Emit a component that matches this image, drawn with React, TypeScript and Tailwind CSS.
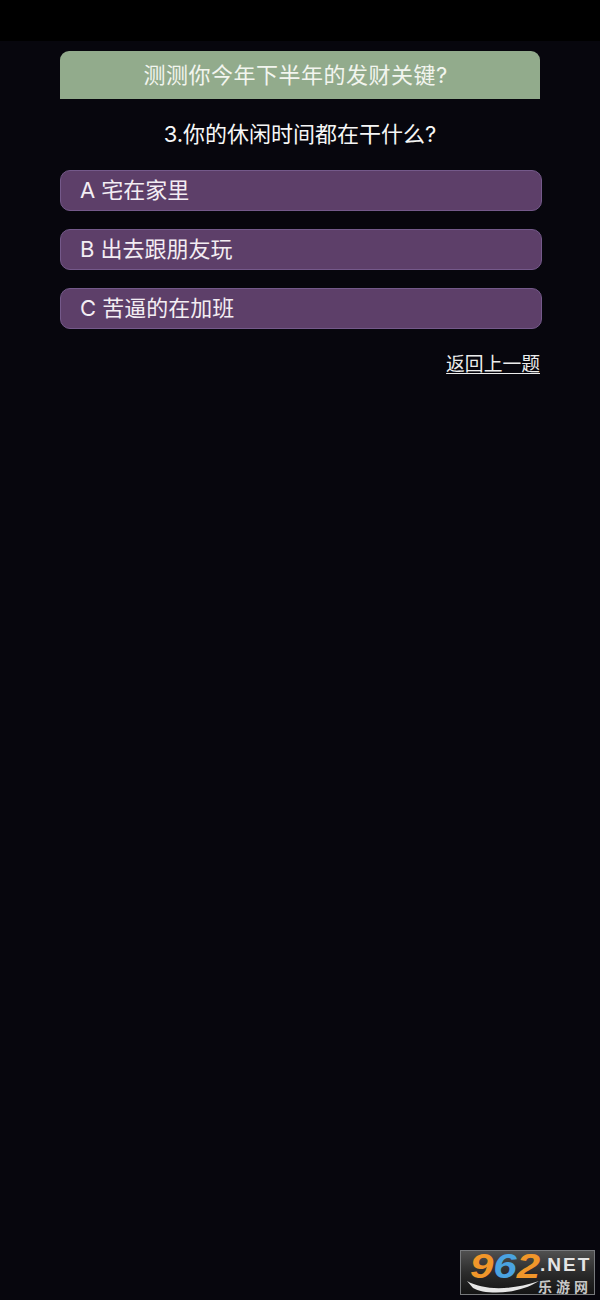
const FONT = "font-['Inter','Noto_Sans_CJK_SC',sans-serif]"

const OPTIONS = ['A 宅在家里', 'B 出去跟朋友玩', 'C 苦逼的在加班']

function Watermark() {
  return (
    <div className="absolute left-[460px] top-[1250px] w-[135px] h-[45px] border border-[#77797c] bg-gradient-to-b from-[#505050] via-[#2c2c2c] to-[#141414]">
      <div className="absolute left-[9px] top-[-3px] flex origin-left scale-x-[1.2] font-['Liberation_Sans',sans-serif] italic font-bold text-[35px] leading-[36px]">
        <span className="text-[#f0962a]">9</span>
        <span className="text-[#4aa3e0]">6</span>
        <span className="text-[#f0962a]">2</span>
      </div>
      <div className="absolute left-[79px] top-[5px] font-['Liberation_Sans',sans-serif] font-bold text-[19px] leading-[18px] tracking-[2px] text-[#e4e4e4]">.NET</div>
      <div className="absolute left-[77px] top-[28px] font-['Noto_Sans_CJK_SC',sans-serif] font-bold text-[14px] leading-[14px] tracking-[4px] text-[#c8c8c8]">乐游网</div>
      <svg className="absolute left-[6px] top-[29px]" width="72" height="14" viewBox="0 0 72 14">
        <path d="M0 1 C16 10 42 11 72 1 C50 15 18 15 6 8 Z" fill="#e6e6e6" />
      </svg>
    </div>
  )
}

export default function App() {
  return (
    <div className={`relative w-[600px] h-[1300px] overflow-hidden bg-[#07060d] text-white ${FONT}`}>
      <div className="h-[41px] bg-black" />

      <div className="pl-[60px] pr-[58px] pt-[10px]">
        <div className="w-[480px] h-[48px] flex items-center justify-center pr-[9px] pt-[1px] rounded-t-[9px] bg-[#92ab8c] text-[22px] tracking-[0.5px] text-[#f2f5ef]">
          测测你今年下半年的发财关键?
        </div>

        <div className="w-[480px] h-[70px] flex items-center justify-center text-[22px] text-[#f6f6f6]">
          3.你的休闲时间都在干什么?
        </div>

        <div className="flex flex-col gap-[18px] mt-[1px]">
          {OPTIONS.map(option => (
            <div
              key={option}
              className="h-[41px] flex items-center pl-[19px] rounded-[10px] border border-[#74598a] bg-[#5d3f69] text-[22px] text-[#f3edf3]"
            >
              {option}
            </div>
          ))}
        </div>

        <div className="w-[480px] flex justify-end mt-[22px]">
          <span className="text-[18.8px] leading-[28px] underline underline-offset-2 text-[#ececec]">返回上一题</span>
        </div>
      </div>

      <Watermark />
    </div>
  )
}
